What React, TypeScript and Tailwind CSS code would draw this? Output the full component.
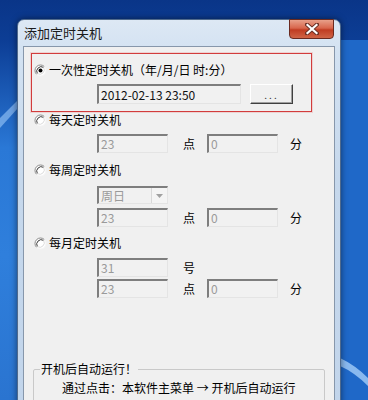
import React from "react";

const FONT = { fontFamily: '"Noto Sans CJK SC", "DejaVu Sans", sans-serif' };

function Radio({ checked = false }: { checked?: boolean }) {
  return (
    <svg width="13" height="13" viewBox="0 0 13 13" className="shrink-0">
      <circle cx="6.5" cy="6.5" r="5.5" fill="#ffffff" />
      <path d="M2.6 10.4 A5.5 5.5 0 0 1 10.4 2.6" fill="none" stroke="#8a8a8a" strokeWidth="1" />
      <path d="M3.4 9.6 A4.5 4.5 0 0 1 9.6 3.4" fill="none" stroke="#3a3a3a" strokeWidth="1" />
      <path d="M10.4 2.6 A5.5 5.5 0 0 1 2.6 10.4" fill="none" stroke="#f4f4f4" strokeWidth="1" />
      <path d="M9.6 3.4 A4.5 4.5 0 0 1 3.4 9.6" fill="none" stroke="#dcdcdc" strokeWidth="1" />
      {checked && <circle cx="6.5" cy="6.5" r="2" fill="#000" />}
    </svg>
  );
}

function Field({ value, w = 71, h = 19, dark = false }: { value: string; w?: number; h?: number; dark?: boolean }) {
  return (
    <div
      className={`flex items-center pl-[2px] bg-[#f1f1f1] border-t-2 border-l-2 border-r border-b border-t-[#7e7e7e] border-l-[#7e7e7e] border-r-[#e4e4e4] border-b-[#e4e4e4] text-[12px] leading-none ${dark ? "text-[#111]" : "text-[#9a9a9a]"}`}
      style={{ width: w, height: h }}
    >
      {value}
    </div>
  );
}

function TimeRow({ h = "23" }: { h?: string }) {
  return (
    <div className="flex items-center ml-[73px]">
      <Field value={h} />
      <span className="ml-[15px] w-[12px] text-[12px] leading-none">点</span>
      <div className="ml-[12px]">
        <Field value="0" />
      </div>
      <span className="ml-[12px] text-[12px] leading-none">分</span>
    </div>
  );
}

function RadioRow({ label, checked = false }: { label: string; checked?: boolean }) {
  return (
    <div className="flex items-center h-[16px] gap-[2px]">
      <Radio checked={checked} />
      <span className="text-[12px] leading-none text-black">{label}</span>
    </div>
  );
}

export default function App() {
  return (
    <div
      className="relative w-[368px] h-[400px] overflow-hidden bg-[linear-gradient(180deg,#0a3588_0%,#0f4aa8_25%,#1b62c4_55%,#1a5bbd_100%)]"
      style={FONT}
    >
      <svg className="absolute inset-0" width="368" height="400" viewBox="0 0 368 400">
        <defs>
          <linearGradient id="lside" x1="0" y1="0" x2="0" y2="1">
            <stop offset="0" stopColor="#0c3d95" />
            <stop offset="0.3" stopColor="#2a78d6" />
            <stop offset="0.6" stopColor="#2f7fdc" />
            <stop offset="1" stopColor="#2a74d0" />
          </linearGradient>
        </defs>
        <rect x="0" y="40" width="20" height="360" fill="url(#lside)" />
        <path d="M0 118 L18 100 L18 108 L0 128 Z" fill="#a9d4ff" opacity="0.55" />
        <rect x="340" y="40" width="28" height="360" fill="#1f68c8" />
        <path d="M340 358 Q355 365 368 378 L368 386 Q354 372 340 366 Z" fill="#b7dcff" opacity="0.7" />
      </svg>

      <div className="relative ml-[17px] mt-[19px] w-[324px] h-[400px] rounded-t-[7px] border border-[#506a8c] bg-[linear-gradient(180deg,#dde8f4_0%,#d3e2f2_8%,#c6d8ec_40%,#c2d5eb_100%)] shadow-[0_0_6px_rgba(0,0,0,0.5)]">
        <div className="flex items-start justify-between h-[26px]">
          <span className="mt-[6px] ml-[6px] text-[13px] leading-none text-[#1b1b1b]">添加定时关机</span>
          <div className="mr-[6px] -mt-[1px] w-[45px] h-[20px] rounded-b-[4px] border border-[#6a2a20] bg-[linear-gradient(180deg,#e8a08a_0%,#d8664c_45%,#c03c22_55%,#cf6446_100%)] flex items-center justify-center">
            <svg width="14" height="12" viewBox="0 0 14 12">
              <path d="M2 1.5 L12 10.5 M12 1.5 L2 10.5" stroke="#6a3026" strokeWidth="4" strokeLinecap="square" />
              <path d="M2.5 2 L11.5 10 M11.5 2 L2.5 10" stroke="#ffffff" strokeWidth="2.2" strokeLinecap="square" />
            </svg>
          </div>
        </div>

        <div className="ml-[5px] w-[312px] h-[380px] border border-[#8797ab] bg-[#f0f0f0] text-black">
          {/* red box */}
          <div className="ml-[7px] mt-[6px] w-[281px] h-[59px] border border-solid border-[#d23c3c] shadow-[0_0_0_1px_rgba(230,120,120,0.25)]">
            <div className="mt-[8px] ml-[2px]">
              <RadioRow label="一次性定时关机（年/月/日 时:分）" checked />
            </div>
            <div className="flex items-center mt-[6px] ml-[65px]">
              <Field value="2012-02-13 23:50" w={144} h={20} dark />
              <div className="ml-[9px] w-[43px] h-[20px] bg-[#f0f0f0] border border-t-white border-l-white border-r-[#404040] border-b-[#404040] shadow-[inset_-1px_-1px_0_#a0a0a0] flex items-end justify-center pb-[3px] text-[10px] leading-none text-[#333] tracking-[2px]">
                ...
              </div>
            </div>
          </div>

          <div className="ml-[10px]">
            <RadioRow label="每天定时关机" />
          </div>
          <div className="mt-[6px]">
            <TimeRow />
          </div>

          <div className="ml-[10px] mt-[9px]">
            <RadioRow label="每周定时关机" />
          </div>
          <div className="ml-[73px] mt-[8px] w-[71px] h-[18px] flex bg-[#f1f1f1] border-t-2 border-l-2 border-r border-b border-t-[#7e7e7e] border-l-[#7e7e7e] border-r-[#e4e4e4] border-b-[#e4e4e4]">
            <span className="flex-1 pl-[2px] text-[12px] leading-[15px] text-[#9a9a9a]">周日</span>
            <div className="w-[16px] h-full bg-[#f4f4f4] border-l border-[#d8d8d8] flex items-center justify-center">
              <svg width="7" height="4" viewBox="0 0 7 4">
                <path d="M0 0 L7 0 L3.5 4 Z" fill="#a0a0a0" />
              </svg>
            </div>
          </div>
          <div className="mt-[4px]">
            <TimeRow />
          </div>

          <div className="ml-[10px] mt-[8px]">
            <RadioRow label="每月定时关机" />
          </div>
          <div className="flex items-center ml-[73px] mt-[7px]">
            <Field value="31" />
            <span className="ml-[15px] text-[12px] leading-none">号</span>
          </div>
          <div className="mt-[2px]">
            <TimeRow />
          </div>

          <fieldset className="ml-[9px] mt-[64px] w-[292px] h-[60px] border border-[#c9c9c9] rounded-[2px] pl-[6px]">
            <legend className="px-[1px] text-[12px] leading-[14px]">开机后自动运行！</legend>
            <div className="ml-[22px] mt-[6px] text-[12px] leading-none">
              通过点击：本软件主菜单 → 开机后自动运行
            </div>
          </fieldset>
        </div>
      </div>
    </div>
  );
}
